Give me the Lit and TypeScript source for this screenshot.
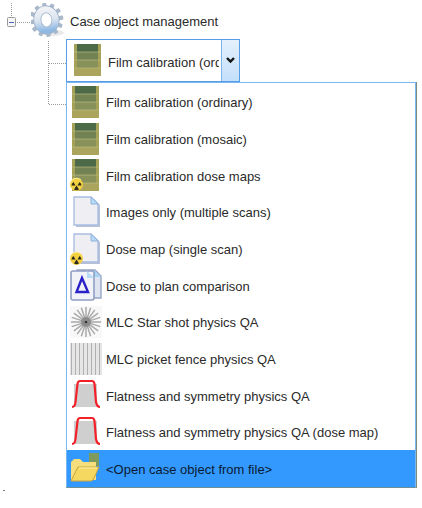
import { LitElement, html, svg, css } from "lit";
import { customElement, state } from "lit/decorators.js";

const film = svg`
  <rect x="2" y="0" width="27" height="32" fill="#a5a157"/>
  <rect x="5" y="0" width="21" height="8" fill="#4d6a48"/>
  <rect x="5" y="8" width="21" height="8" fill="#728252"/>
  <rect x="5" y="16" width="21" height="8" fill="#879159"/>
  <rect x="2" y="24" width="27" height="8" fill="#aba45c"/>
  <path d="M2 8h27M2 16h27M2 24h27" stroke="#b9bb84" stroke-width=".7"/>`;

const radiation = svg`
  <circle cx="6.500" cy="25.500" r="6.500" fill="#f3cf42"/>
  <path d="M2 21a6.500 6.500 0 0 1 9 0" stroke="#fff0a0" fill="none"/>
  <path d="M5.500 26.500H1.500A5 5 0 0 1 3.500 23ZM7.500 26.500H11.500A5 5 0 0 0 9.500 23ZM6.500 26.500L4 30.500A5 5 0 0 0 9 30.500Z"
    fill="#2c2a1c"/>`;

const page = svg`
  <path d="M6 3H24L30 9V31H6Z" fill="#b9bfd4"/>
  <path d="M4 1H21L28 8V29H4Z" fill="#efeff3" stroke="#a9bfe2" stroke-width="1.400"/>
  <path d="M21 1L28 8H21Z" fill="#b9dcf6" stroke="#8fb0dd"/>`;

const profile = svg`
  <path d="M4 28V5H27V28Z" fill="#cfcfcf"/>
  <path d="M2 28Q5 28 5.500 23L7.500 5Q8 2 10 2H22Q24 2 24.500 5L26 23Q27 28 30 28" fill="none" stroke="#f3202a" stroke-width="2.200"/>`;

const spokes = Array.from({ length: 20 }, (_, i) => {
  const a = (i * Math.PI) / 10;
  return svg`<line x1=${16 + Math.cos(a) * 2} y1=${16 + Math.sin(a) * 2} x2=${16 + Math.cos(a) * 15} y2=${16 + Math.sin(a) * 15}/>`;
});

const icons = {
  film,
  filmDose: svg`${film}${radiation}`,
  page,
  pageDose: svg`${page}${radiation}`,
  compare: svg`
    <path d="M7 1H25L31 7V29H7Z" fill="#dfe4f1" stroke="#97a5c8" stroke-width="1.400"/>
    <path d="M24 1L31 8H24Z" fill="#a8d4f4"/>
    <rect x="1" y="2" width="23" height="29" rx="2" fill="#f2f3f8" stroke="#8f9ec4" stroke-width="1.600"/>
    <path d="M17 2L24 9H17Z" fill="#b9dcf6"/>
    <path d="M12 9L18 23H6.500Z" fill="none" stroke="#2a22c8" stroke-width="2.400"/>`,
  star: svg`
    <rect width="32" height="32" fill="#f8f8f8"/>
    <g stroke="#a9a9a9" stroke-width="1.500">${spokes}</g>
    <circle cx="16" cy="16" r="5" fill="#777" opacity=".6"/>
    <circle cx="16" cy="16" r="1.500" fill="#333"/>`,
  fence: svg`
    <rect width="32" height="32" fill="#e6e6e6"/>
    <path d="M1 0V32M5 0V32M9 0V32M13 0V32M17 0V32M21 0V32M25 0V32M29 0V32" transform="translate(.5 0)" stroke="#b0b0b0"/>`,
  profile,
  folder: svg`
    <rect x="19" y="0" width="10" height="13" fill="#7e9a5c"/>
    <path d="M1 27V9L4 6H10L13 9H26V27Z" fill="#f6de7c"/>
    <path d="M1 28L8 14H29L23 27Q22 28 20 28Z" fill="#f4d860" stroke="#c9a53c"/>
    <path d="M9 15H27" stroke="#fff3b0"/>`,
};

type IconName = keyof typeof icons;

const entries: { label: string; icon: IconName }[] = [
  { label: "Film calibration (ordinary)", icon: "film" },
  { label: "Film calibration (mosaic)", icon: "film" },
  { label: "Film calibration dose maps", icon: "filmDose" },
  { label: "Images only (multiple scans)", icon: "page" },
  { label: "Dose map (single scan)", icon: "pageDose" },
  { label: "Dose to plan comparison", icon: "compare" },
  { label: "MLC Star shot physics QA", icon: "star" },
  { label: "MLC picket fence physics QA", icon: "fence" },
  { label: "Flatness and symmetry physics QA", icon: "profile" },
  { label: "Flatness and symmetry physics QA (dose map)", icon: "profile" },
  { label: "<Open case object from file>", icon: "folder" },
];

const icon = (name: IconName) =>
  html`<svg class="icon" width="32" height="32" viewBox="0 0 32 32" aria-hidden="true">${icons[name]}</svg>`;

const teeth = Array.from({ length: 12 }, (_, i) =>
  svg`<rect x="13.500" y="0" width="4" height="6" rx="1" transform=${`rotate(${i * 30} 15.500 16)`}/>`);

@customElement("app-root")
export class AppRoot extends LitElement {
  @state() private chosen = 0;
  @state() private active = 10;

  static styles = css`
    :host {
      display: block;
      background: #fff;
      color: #2a2a2a;
      font: 13px/16px "Liberation Sans", Arial, sans-serif;
    }
    .tree { padding: 0 6px 0 6px; }
    .node { display: flex; align-items: center; height: 39px; }
    .expander {
      display: block;
      flex: none;
      width: 25px;
      height: 39px;
      padding: 0;
      border: 0;
      background: none;
    }
    .expander svg { display: block; }
    .gear { flex: none; margin-right: 5px; }
    .node .label { padding-top: 5px; }
    .branch { display: flex; align-items: flex-start; }
    .guides { flex: none; width: 60px; }
    .field { flex: 1; min-width: 0; }
    .combo {
      position: relative;
      display: flex;
      box-sizing: border-box;
      width: 174px;
      height: 43px;
      border: 1px solid #569de5;
      background: #fff;
    }
    .combo .icon { position: absolute; left: 5px; top: 4px; pointer-events: none; }
    select {
      appearance: none;
      flex: 1;
      min-width: 0;
      border: 0;
      border-radius: 0;
      margin: 0 2px 0 0;
      padding: 4px 0 0 41px;
      background: none;
      color: inherit;
      font: inherit;
      outline: none;
      text-overflow: clip;
    }
    .arrow {
      display: grid;
      place-items: center;
      width: 18px;
      padding: 0;
      border: 0;
      border-left: 1px solid #7eb4ea;
      background: linear-gradient(#e4f0fc, #c4dffb);
    }
    .list {
      margin: 0;
      padding: 0;
      list-style: none;
      border: 1px solid #7ab6f0;
      border-bottom-color: #6f8f96;
      background: #fff;
      box-shadow: 1px 0 #7d8c7c;
    }
    .item {
      display: flex;
      align-items: center;
      gap: 4px;
      width: 100%;
      height: 37px;
      padding: 0 3px;
      border: 0;
      background: none;
      color: inherit;
      font: inherit;
      text-align: left;
    }
    li:nth-child(3n) .item { height: 36px; }
    .item.active { background: #3399ff; color: #0b1a30; }
    .icon { flex: none; }
    .item .label { padding-top: 3px; }
    .mark { display: block; width: 2px; height: 1px; margin: 2px 0 17px 3px; background: #777; }
  `;

  render() {
    return html`
      <main class="tree">
        <div class="node">
          <button class="expander" aria-label="Collapse" aria-expanded="true">
            <svg width="26" height="39" viewBox="0 0 26 39" aria-hidden="true">
              <path d="M5.500 3V17M11 22.500H26" stroke="#999" stroke-dasharray="1 1"/>
              <rect x="1.500" y="17.500" width="8" height="9" rx="1" fill="#f6f6f6" stroke="#999"/>
              <path d="M3 22.500H8" stroke="#4a63b5"/>
            </svg>
          </button>
          <svg class="gear" width="34" height="34" viewBox="0 0 32 32" aria-hidden="true">
            <defs><linearGradient id="steel" x1="0" y1="0" x2="0" y2="1">
              <stop offset="0" stop-color="#eef1f5"/><stop offset=".5" stop-color="#dbe5f0"/><stop offset="1" stop-color="#8fb8e2"/>
            </linearGradient></defs>
            <ellipse cx="20" cy="28" rx="11" ry="3" fill="#e9e9e9"/>
            <g transform="rotate(-8 14 16) translate(-1 0)">
              <g fill="#a9b8ca">${teeth}</g>
              <ellipse cx="15.500" cy="16" rx="8.500" ry="10" fill="none" stroke="#9fb2c9" stroke-width="7.500"/>
              <ellipse cx="15.500" cy="16" rx="8.500" ry="10" fill="none" stroke="url(#steel)" stroke-width="6"/>
            </g>
          </svg>
          <span class="label">Case object management</span>
        </div>
        <div class="branch">
          <svg class="guides" width="60" height="68" viewBox="0 0 60 68" aria-hidden="true">
            <path d="M42.500 2V65M43 24.500H60M43 65.500H60" fill="none" stroke="#999" stroke-dasharray="1 1"/>
          </svg>
          <div class="field">
            <div class="combo">
              ${icon(entries[this.chosen].icon)}
              <select aria-label="Case object" @change=${(e: Event) => (this.chosen = (e.target as HTMLSelectElement).selectedIndex)}>
                ${entries.map((e, i) => html`<option ?selected=${i === this.chosen}>${e.label}</option>`)}
              </select>
              <button class="arrow" aria-label="Show list">
                <svg width="9" height="7" viewBox="0 0 9 7"><path d="M1 1L4.500 4.500L8 1" fill="none" stroke="#111" stroke-width="2.400"/></svg>
              </button>
            </div>
            <ul class="list" aria-label="Case objects">
              ${entries.map((e, i) => html`
                <li><button class="item ${i === this.active ? "active" : ""}"
                  @mouseenter=${() => (this.active = i)} @click=${() => (this.chosen = i)}>
                  ${icon(e.icon)}<span class="label">${e.label}</span>
                </button></li>`)}
            </ul>
          </div>
        </div>
      </main>
      <span class="mark"></span>`;
  }
}
